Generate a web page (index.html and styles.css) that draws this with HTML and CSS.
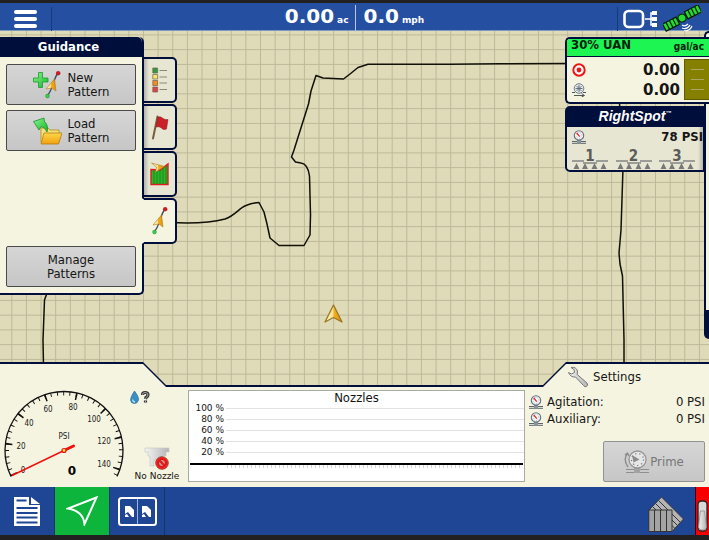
FILE: index.html
```html
<!DOCTYPE html>
<html lang="en">
<head>
  <meta charset="UTF-8">
  <meta name="viewport" content="width=device-width, initial-scale=1.0">
  <title>Guidance</title>
  <link rel="stylesheet" href="styles.css">
</head>
<body>
  <!-- Shared icon parts -->
  <svg class="defs" width="0" height="0">
    <defs>
      <linearGradient id="gold" x1="0" x2="1"><stop offset="0" stop-color="#fff6cf"/><stop offset=".48" stop-color="#fbe08a"/><stop offset=".52" stop-color="#f0b020"/><stop offset="1" stop-color="#e0920c"/></linearGradient>
      <linearGradient id="folder" x1="0" y1="0" x2="0" y2="1"><stop offset="0" stop-color="#ffd84a"/><stop offset="1" stop-color="#f0a010"/></linearGradient>
      <linearGradient id="green" x1="0" y1="0" x2="1" y2="1"><stop offset="0" stop-color="#8df58d"/><stop offset="1" stop-color="#12b52a"/></linearGradient>
      <linearGradient id="steel" x1="0" x2="1"><stop offset="0" stop-color="#f4f4f4"/><stop offset="1" stop-color="#b4b4b4"/></linearGradient>
      <symbol id="pattern" viewBox="0 0 16 28">
        <path d="M2 25C8 19 8 8 13 2" fill="none" stroke="#44505e" stroke-width="1.4"/>
        <path d="M9.500 8 L11 20 L7 17 L1 18Z" fill="url(#gold)" stroke="#b07a18" stroke-width=".6"/>
        <circle cx="2.500" cy="25" r="1.900" fill="#3bd04c" stroke="#158a28" stroke-width=".5"/>
        <circle cx="13.200" cy="2.200" r="1.900" fill="#e3151d" stroke="#8c1016" stroke-width=".5"/>
      </symbol>
      <symbol id="gauge" viewBox="0 0 14 14">
        <path d="M0 11.500H14M0 13.300H14" stroke="#5c6670" stroke-width="1"/>
        <rect x="5" y="9" width="4" height="4.500" fill="#8b959e"/>
        <circle cx="7" cy="5.400" r="4.700" fill="#f7f8fa" stroke="#66717c" stroke-width="1.100"/>
        <circle cx="7" cy="5.400" r="3" fill="none" stroke="#8492a0" stroke-width=".7" stroke-dasharray=".8 1.100"/>
        <path d="M7.800 6.600L4.700 3" stroke="#e02020" stroke-width="1.200"/>
      </symbol>
      <symbol id="boom" viewBox="0 0 36 9">
        <path d="M0 1H12M24 1H36M11 3H25" stroke="#9c9c98" stroke-width="2"/>
        <path d="M1.500 9L4.500 3L7.500 9ZM10 9L13 3L16 9ZM19.500 9L22.500 3L25.500 9ZM28.500 9L31.500 3L34.500 9Z" fill="#777"/>
      </symbol>
    </defs>
  </svg>

  <header class="topbar">
    <div class="topbar-side">
      <button class="menu-btn" aria-label="Menu"><span></span><span></span><span></span></button>
      <p class="reading">0.00 <small>ac</small></p>
    </div>
    <div class="topbar-side topbar-right">
      <p class="reading">0.0 <small>mph</small></p>
      <div class="status">
        <svg width="34" height="20" viewBox="0 0 34 20">
          <rect x="1.500" y="2" width="18.500" height="16" rx="4" fill="none" stroke="#fff" stroke-width="2.600"/>
          <path d="M22 10H28M33 4H28V16H33M28 10H33" fill="none" stroke="#fff" stroke-width="1.500"/>
          <path d="M29 2h5v4h-5zM29 8h5v4h-5zM29 14h5v4h-5z" fill="#fff"/>
        </svg>
        <svg width="38" height="27" viewBox="0 0 38 27">
          <g transform="rotate(-27 19 13)" stroke="#071c07" stroke-width="1.200" fill="#23dc32">
            <path d="M-1 9.500h3.800v8h-3.800zM2.800 9.500h3.800v8h-3.800zM6.600 9.500h3.800v8h-3.800zM10.400 9.500h3.600v8h-3.600zM24 8.500h3.800v8h-3.800zM27.800 8.500h3.800v8h-3.800zM31.600 8.500h3.800v8h-3.800zM35.400 8.500h3.800v8h-3.800z"/>
            <circle cx="19" cy="13" r="4"/>
          </g>
          <path d="M19 20q3 2 6-1M19 23q5 2 8-3M21 26q6 0 8-5" fill="none" stroke="#fff" stroke-width="1.200"/>
        </svg>
      </div>
    </div>
  </header>

  <main class="map">
    <svg class="map-canvas" viewBox="0 31 709 355" preserveAspectRatio="xMinYMin slice">
      <defs>
        <pattern id="grid" x="11.300" y="34.400" width="14.630" height="14.750" patternUnits="userSpaceOnUse">
          <path d="M.5 0V14.750M0 .5H14.630" stroke="#bdb898" stroke-width="1"/>
        </pattern>
      </defs>
      <rect y="31" width="709" height="355" fill="url(#grid)"/>
      <g fill="none" stroke="#101008" stroke-width="1.500" stroke-linejoin="round">
        <path d="M170 222.500C190 223.500 210 223 225 219C236 215 239 208 246 205.500Q252 203 259 202.500L264 212L267 224L270 238L279 245.500H304L310 235L310.500 215L309.500 176Q308 164 301 163L295.500 162L291.500 157L294 150L308.500 104L311 91L316 75.500L323 78L343.500 79L350 74L358 67.500L368 64.300H450L500 63.700L567 63.500"/>
        <path d="M623 168L621 230L619 253L620 264L622.500 276L624 340V366"/>
        <path d="M47 293L44.500 300L43 340L43.500 366"/>
        <path d="M619 100L620 108"/>
      </g>
      <path d="M333.500 305L342 322L333.500 317.500L325 322Z" fill="url(#gold)" stroke="#9b7724" stroke-width="1.300" stroke-linejoin="round"/>
    </svg>

    <section class="guidance">
      <div class="panel guidance-panel">
        <h2>Guidance</h2>
        <div class="guidance-body">
          <button class="btn">
            <svg width="29" height="28" viewBox="0 0 29 28">
              <path d="M5.500 1.500h4v5.500h5.500v4h-5.500v5.500h-4v-5.500H0.500V7h5z" fill="url(#green)" stroke="#1a9a2c" stroke-width=".8"/>
              <use href="#pattern" x="12" width="16" height="28"/>
            </svg>
            <span>New<br>Pattern</span>
          </button>
          <button class="btn">
            <svg width="29" height="28" viewBox="0 0 29 28">
              <path d="M8 25V11h7l2 2h9v12z" fill="#f5e07a" stroke="#b88a18" stroke-width=".8"/>
              <path d="M11 16h18l-3.500 11H8z" fill="url(#folder)" stroke="#b97c0c" stroke-width=".8"/>
              <path d="M.5 4.500L11 1L11.500 4.500Q16 9 14 15Q12 10 8 9.500L6 13Z" fill="url(#green)" stroke="#1c8f2b" stroke-width=".8"/>
            </svg>
            <span>Load<br>Pattern</span>
          </button>
          <button class="btn btn-bottom">Manage<br>Patterns</button>
        </div>
      </div>
      <nav class="tabs">
        <button class="tab" aria-label="Legend">
          <svg width="16" height="26" viewBox="0 0 16 26">
            <path d="M7.500 3.500H15M7.500 10H15M7.500 16H15M7.500 22.500H15" stroke="#888a80" stroke-width="1"/>
            <g stroke="#6a6450" stroke-width=".7"><path d="M.8 1h4.800v5H.8z" fill="#2f9e3a"/><path d="M.8 7.500h4.800v4.500H.8z" fill="#f5e66c"/><path d="M.8 13.500h4.800v5H.8z" fill="#f58a1e"/><path d="M.8 20h4.800v5H.8z" fill="#e34048"/></g>
          </svg>
        </button>
        <button class="tab" aria-label="Flags">
          <svg width="18" height="25" viewBox="0 0 18 25">
            <path d="M6.500 1.500L2 23.500" stroke="#7b5c38" stroke-width="2" stroke-linecap="round"/>
            <path d="M7 2Q10 1 12 3.500Q14 5 17 4.500L15.500 14Q12 15.500 10.500 13Q8 11 5 12Z" fill="#c9202a" stroke="#8c1118" stroke-width=".5"/>
          </svg>
        </button>
        <button class="tab" aria-label="Field map">
          <svg width="19" height="24" viewBox="0 0 19 24">
            <path d="M1 7.500L10 8L18 2V22.500H1Z" fill="#2db52a" stroke="#dc1e1e" stroke-width="1.400"/>
            <path d="M4 8V22M7 8V22M10 8V22M13 6V22M16 4V22" stroke="#187c1a" stroke-width=".8"/>
            <path d="M1.500 1L14.500 4.500L5.500 10L6.500 5Z" fill="url(#gold)" stroke="#a87a1c" stroke-width=".6"/>
          </svg>
        </button>
        <button class="tab tab-active" aria-label="Guidance">
          <svg width="16" height="28"><use href="#pattern" width="16" height="28"/></svg>
        </button>
      </nav>
    </section>

    <aside class="drawer"></aside>
    <aside class="readouts">
      <section class="panel product">
        <h2>30% UAN <small>gal/ac</small></h2>
        <div class="product-body">
          <p>
            <svg width="14" height="14" viewBox="0 0 14 14"><circle cx="7" cy="7" r="5.700" fill="#fff" stroke="#f01414" stroke-width="2"/><circle cx="7" cy="7" r="2.400" fill="#f01414"/></svg>
            <b>0.00</b>
          </p>
          <p>
            <svg width="14" height="14" viewBox="0 0 14 14"><circle cx="7" cy="5.500" r="4.800" fill="#e8ebee" stroke="#6d7882" stroke-width="1"/><path d="M7 2V9M3.500 5.500H10.500M4.500 3L9.500 8M9.500 3L4.500 8" stroke="#596673" stroke-width=".9"/><path d="M0 9.500H3M11 9.500H14M2 12.500H12M9.500 10.500L12.500 12.500L9.500 14" fill="none" stroke="#4c565f" stroke-width="1"/></svg>
            <b>0.00</b>
          </p>
          <div class="tank"><span></span><span></span><span></span></div>
        </div>
      </section>
      <section class="panel rightspot">
        <h2>RightSpot<sup>™</sup></h2>
        <p>
          <svg width="14" height="14"><use href="#gauge" width="14" height="14"/></svg>
          <b>78 PSI</b>
        </p>
        <div class="booms">
          <div class="boom"><b>1</b><svg width="36" height="9"><use href="#boom" width="36" height="9"/></svg></div>
          <div class="boom"><b>2</b><svg width="36" height="9"><use href="#boom" width="36" height="9"/></svg></div>
          <div class="boom"><b>3</b><svg width="36" height="9"><use href="#boom" width="36" height="9"/></svg></div>
        </div>
      </section>
    </aside>
  </main>

  <section class="dock">
    <svg class="dial" width="128" height="100" viewBox="0 0 128 100">
      <g fill="none" stroke="#111">
        <path d="M11 90.400A59 59 0 1 1 117 90.400" stroke-width="1.300"/>
        <path d="M12.800 89.500A57 57 0 1 1 115.200 89.500" pathLength="145" stroke-width="4" stroke-dasharray=".6 3.400"/>
        <path d="M14.100 88.800A55.500 55.500 0 1 1 113.900 88.800" pathLength="145" stroke-width="7" stroke-dasharray="1 19"/>
      </g>
      <g class="dial-labels">
        <text x="23" y="87">0</text>
        <text x="21" y="63">20</text>
        <text x="29" y="40">40</text>
        <text x="48" y="26">60</text>
        <text x="73" y="24">80</text>
        <text x="94" y="36">100</text>
        <text x="104" y="58">120</text>
        <text x="104" y="81">140</text>
        <text x="64" y="53">PSI</text>
        <text class="dial-value" x="72" y="89">0</text>
      </g>
      <path d="M12 89.500L64 64.500" stroke="#f01010" stroke-width="1.500"/>
      <path d="M64 64.500L73.500 60" stroke="#f01010" stroke-width="3" stroke-linecap="round"/>
      <circle cx="64" cy="64.500" r="2" fill="#ffe94a" stroke="#f01010" stroke-width="1.200"/>
    </svg>

    <div class="nozzle-state">
      <svg width="20" height="15" viewBox="0 0 20 15">
        <path d="M4.500 1Q9 7 8.500 10Q7.500 13.500 4.500 13.500Q1 13.500 .5 10Q.5 7 4.500 1Z" fill="#3a8fc4" stroke="#2a6c98" stroke-width=".7"/>
        <path d="M2.500 9.500Q3 12 5 12" fill="none" stroke="#a7dcf5" stroke-width="1.300"/>
        <path d="M12.500 5Q12.500 2.500 15 2.500Q18 2.500 18 5Q18 6.500 16 7.500L15.500 9M15.500 10.500V12.500" fill="none" stroke="#333" stroke-width="3.200"/>
        <path d="M12.500 5Q12.500 2.500 15 2.500Q18 2.500 18 5Q18 6.500 16 7.500L15.500 9M15.500 11V12" fill="none" stroke="#a8a8a4" stroke-width="1"/>
      </svg>
      <div class="nozzle">
        <svg width="26" height="24" viewBox="0 0 26 24">
          <path d="M1 2H25V6H22V10H18V17H14V14H10V20H6V10H4V6H1Z" fill="url(#steel)" stroke="#c8c8c4" stroke-width=".7"/>
          <circle cx="18" cy="17" r="6.300" fill="#ee3a34" stroke="#8f1512" stroke-width=".7"/>
          <circle cx="18" cy="17" r="4" fill="#b4a09c" stroke="#e81414" stroke-width="2.200"/>
          <path d="M15 14L21 20" stroke="#e81414" stroke-width="2.200"/>
        </svg>
        <p>No Nozzle</p>
      </div>
    </div>

    <section class="chart">
      <h3>Nozzles</h3>
      <ul>
        <li><span>100 %</span></li>
        <li><span>80 %</span></li>
        <li><span>60 %</span></li>
        <li><span>40 %</span></li>
        <li><span>20 %</span></li>
      </ul>
      <div class="chart-axis"></div>
    </section>

    <section class="pressure">
      <button class="settings">
        <svg width="22" height="22" viewBox="0 0 22 22">
          <path d="M4 1.500Q9 .5 10.500 5L10.200 8.500L20 17Q21.500 19.500 19.500 20.500Q18 21.500 16.500 19.500L8.500 11Q3.500 11.500 1.500 6.500L4.500 8L7.500 6.500L7 3.500Z" fill="url(#steel)" stroke="#777" stroke-width="1"/>
        </svg>
        Settings
      </button>
      <dl>
        <div><svg width="14" height="14"><use href="#gauge" width="14" height="14"/></svg><dt>Agitation:</dt><dd>0 PSI</dd></div>
        <div><svg width="14" height="14"><use href="#gauge" width="14" height="14"/></svg><dt>Auxiliary:</dt><dd>0 PSI</dd></div>
      </dl>
      <button class="btn prime" disabled>
        <svg width="25" height="24" viewBox="0 0 25 24">
          <path d="M2 19.500H25M2 22.500H25" stroke="#8e8e8e" stroke-width="1.200"/>
          <path d="M10 17h6v6h-6z" fill="#a2a2a2"/>
          <circle cx="13.500" cy="9.500" r="8.500" fill="#e6e6e6" stroke="#959595" stroke-width="1.300"/>
          <circle cx="13.500" cy="9.500" r="6" fill="none" stroke="#777" stroke-width="1.200" stroke-dasharray="1.200 3"/>
          <path d="M8 5L15.500 9.500L9.500 12.500Z" fill="#8c8c8c"/>
          <path d="M4 17Q-1 10 3 4M1 5L3.500 3L5 6" fill="none" stroke="#8c8c8c" stroke-width="1.400"/>
        </svg>
        Prime
      </button>
    </section>
  </section>

  <footer class="taskbar">
    <button class="task" aria-label="Reports">
      <svg width="26" height="29" viewBox="0 0 26 29">
        <path d="M0 0H15V8H26V29H0Z" fill="#fff"/>
        <path d="M17 0L26 7H17Z" fill="#fff"/>
        <path d="M2.500 3.500H12.500M2.500 11H23.500M2.500 16H23.500M2.500 20.500H23.500M2.500 25.500H23.500" stroke="#1f4694" stroke-width="2.200"/>
      </svg>
    </button>
    <button class="task task-active" aria-label="Navigate">
      <svg width="32" height="30" viewBox="0 0 32 30">
        <path d="M30.500 1.500L2 12.500Q17 15 18.500 28Z" fill="none" stroke="#fff" stroke-width="2"/>
      </svg>
    </button>
    <button class="task" aria-label="Layout">
      <svg width="39" height="29" viewBox="0 0 39 29">
        <rect x="1" y="1" width="37" height="27" rx="2.500" fill="none" stroke="#fff" stroke-width="2"/>
        <path d="M19.500 2V27" stroke="#9fb3da" stroke-width="1"/>
        <path d="M7 9H12L16 13V20H14L10 15L7 17ZM24 9H29L33 13V20H31L27 15L24 17Z" fill="#fff"/>
        <path d="M7 18V20H11L9 17ZM24 18V20H28L26 17Z" fill="#fff"/>
      </svg>
    </button>
    <div class="task-end">
      <svg width="36" height="36" viewBox="0 0 36 36">
        <g stroke="#333" stroke-width="1">
          <path d="M13.500 1L35.500 23L24 35.500L1 14Z" fill="#b4b4b4"/>
          <path d="M10.500 4.500L32.500 26.500M7.500 7.500L29.500 29.500M4.500 10.500L27 32.500" fill="none"/>
          <path d="M.8 14H24V35.500H.8Z" fill="#a4a4a4"/>
          <path d="M6.500 14V35.500M12.500 14V35.500M18.500 14V35.500"/>
        </g>
      </svg>
      <button class="master" aria-label="Master switch">
        <svg width="12" height="32" viewBox="0 0 12 32">
          <rect x="1" y="1" width="9" height="30" rx="3.500" fill="#d8d8d8" stroke="#222" stroke-width="1.300"/>
          <path d="M3.500 11H7.500L9.500 27Q9 30 5.500 30Q2 30 1.500 27Z" fill="url(#steel)" stroke="#888" stroke-width=".7"/>
        </svg>
      </button>
    </div>
  </footer>
</body>
</html>
```

FILE: styles.css
```css
* {
  box-sizing: border-box;
  margin: 0;
  padding: 0;
}
body {
  min-height: 100vh;
  display: flex;
  flex-direction: column;
  overflow: hidden;
  border-top: 3px solid #222021;
  border-bottom: 5px solid #222021;
  background-color: #dfdab7;
  color: #151515;
  font-family: 'DejaVu Sans Condensed', 'DejaVu Sans', sans-serif;
  font-size: 13px;
  line-height: 14px;
}
button {
  font: inherit;
  color: inherit;
  border: none;
  background: none;
  cursor: pointer;
}
svg {
  display: block;
  flex: none;
}
.defs {
  position: absolute;
}

/* Top bar */
.topbar {
  display: grid;
  grid-template-columns: 1fr 1fr;
  height: 28px;
  background-color: #2550a2;
  border-bottom: 1px solid #7f98c0;
  color: #fff;
}
.topbar-side {
  display: flex;
  justify-content: space-between;
  align-items: center;
  padding: 2px 6px 2px 0;
}
.topbar-right {
  padding: 2px 8px 2px 0;
}
.reading {
  display: flex;
  align-items: baseline;
  gap: 3px;
  font-family: 'DejaVu Sans', sans-serif;
  font-weight: bold;
  font-size: 20px;
  line-height: 23px;
}
.topbar-right .reading {
  border-left: 1px solid #b8c6e2;
  padding-left: 8px;
}
.reading small {
  font-size: 9px;
}
.menu-btn {
  display: flex;
  flex-direction: column;
  gap: 3px;
  width: 52px;
  height: 24px;
  padding: 3px 14px;
  border-right: 1px solid #153a80;
}
.menu-btn span {
  height: 4px;
  border-radius: 2px;
  background-color: #fff;
}
.status {
  display: flex;
  align-items: center;
  gap: 6px;
  height: 24px;
  padding-left: 5px;
  border-left: 1px solid #153a80;
}

/* Map and floating panels */
.map {
  position: relative;
  flex: 1;
  min-height: 300px;
}
.map-canvas {
  position: absolute;
  width: 100%;
  height: 100%;
}
.panel {
  border: 2px solid #000e3b;
  background-color: #f5f4e0;
}
.panel h2 {
  height: 20px;
  font-size: 13px;
  line-height: 18px;
  color: #fff;
  background-color: #000e3b;
}
.guidance {
  position: absolute;
  top: 6px;
  left: 0;
  display: flex;
  align-items: flex-start;
}
.guidance-panel {
  width: 144px;
  border-left: none;
  border-radius: 0 5px 5px 0;
  border-top: none;
}
.guidance-panel h2 {
  line-height: 20px;
  padding-right: 5px;
  text-align: center;
  border-radius: 0 5px 0 0;
}
.guidance-body {
  display: flex;
  flex-direction: column;
  gap: 5px;
  height: 236px;
  padding: 7px 6px 6px;
}
.btn {
  display: flex;
  align-items: center;
  justify-content: center;
  gap: 6px;
  height: 41px;
  border: 1px solid #4a4a4a;
  border-radius: 2px;
  background: linear-gradient(#d6d6d6, #c6c6c6);
  text-align: left;
}
.btn-bottom {
  margin-top: auto;
  text-align: center;
}
.tabs {
  display: flex;
  flex-direction: column;
  gap: 1px;
  margin: 20px 0 0 -2px;
}
.tab {
  display: flex;
  align-items: center;
  justify-content: center;
  width: 35px;
  height: 46px;
  border: 2px solid #000e3b;
  border-radius: 0 5px 5px 0;
  background: linear-gradient(to right, #b4b4a8, #e7e6d2 5px);
}
.tab-active {
  border-left-color: #f5f4e0;
  background: #f5f4e0;
}
.readouts {
  position: absolute;
  top: 6px;
  right: 0;
  display: flex;
  flex-direction: column;
  gap: 2px;
  width: 144px;
}
.readouts .panel {
  border-radius: 5px;
}
.readouts p {
  display: flex;
  align-items: center;
  justify-content: space-between;
}
.product {
  overflow: hidden;
}
.readouts .product {
  border-right: none;
  border-radius: 5px 0 0 5px;
}
.product h2 {
  display: flex;
  justify-content: space-between;
  height: 18px;
  padding: 0 5px 0 4px;
  line-height: 12px;
  color: #0a2010;
  background-color: #1cf552;
  border-bottom: 1px solid #000e3b;
}
.product small {
  font-size: 10px;
  line-height: 16px;
}
.product-body {
  position: relative;
  padding: 3px 29px 2px 5px;
}
.product-body p {
  height: 20px;
}
.product-body b {
  font-family: 'DejaVu Sans', sans-serif;
  font-size: 15px;
}
.tank {
  position: absolute;
  top: 2px;
  right: 0;
  display: flex;
  flex-direction: column;
  justify-content: space-evenly;
  align-items: center;
  width: 25px;
  height: 41px;
  border: 1px solid #5f5c00;
  border-right: none;
  background-color: #858000;
}
.tank span {
  width: 13px;
  height: 1px;
  background-color: #aaa665;
}
.readouts .rightspot {
  width: 139px;
  border-radius: 5px 0 0 5px;
  border-right-width: 1px;
  background: linear-gradient(to left, #b4b4a8, #e7e6d2 5px);
}
.rightspot h2 {
  height: 19px;
  font: italic bold 14px/16px 'Liberation Sans', sans-serif;
  text-align: center;
}
.rightspot sup {
  font-size: 6px;
  vertical-align: 6px;
  line-height: 6px;
}
.rightspot p {
  height: 19px;
  padding-left: 5px;
}
.booms {
  display: flex;
  justify-content: space-between;
  height: 24px;
  padding: 6px 8px 0 5px;
}
.boom {
  display: flex;
  flex-direction: column;
  align-items: center;
}
.boom b {
  height: 8px;
  font-size: 15px;
  line-height: 9px;
  color: #5c5c58;
}
.drawer {
  position: absolute;
  top: 0;
  right: 0;
  width: 5px;
  height: 308px;
  border: 2px solid #000e3b;
  border-right: none;
  border-bottom-width: 29px;
  border-radius: 5px 0 0 5px;
  background-color: #f5f4e0;
}

/* Dock */
.dock {
  position: relative;
  z-index: 1;
  display: flex;
  height: 125px;
  margin-top: -24px;
}
.dock::before,
.dock::after {
  content: '';
  position: absolute;
  z-index: -1;
  inset: 0;
  background-color: #000e3b;
  clip-path: polygon(0 0, 143px 0, 166px 23px, calc(100% - 166px) 23px, calc(100% - 143px) 0, 100% 0, 100% 100%, 0 100%);
}
.dock::after {
  top: 2px;
  background-color: #f5f4e0;
}
.dial {
  margin-top: 24px;
}
.dial-labels {
  font-size: 8px;
  text-anchor: middle;
  fill: #222;
}
.dial-value {
  font-family: 'DejaVu Sans', sans-serif;
  font-weight: bold;
  font-size: 12px;
  fill: #000;
}
.nozzle-state {
  display: flex;
  flex-direction: column;
  justify-content: space-between;
  width: 60px;
  padding: 28px 4px 4px 2px;
}
.nozzle {
  display: flex;
  flex-direction: column;
  align-items: center;
}
.nozzle p {
  font: 9px/13px 'DejaVu Sans', sans-serif;
  white-space: nowrap;
}
.chart {
  flex: 1;
  margin: 28px 0 5px;
  border: 1px solid #a9aaa4;
  background-color: #fff;
}
.chart h3 {
  height: 12px;
  font-weight: normal;
  font-size: 13px;
  text-align: center;
}
.chart ul {
  list-style: none;
  padding-bottom: 5px;
  font: 9px/11px 'DejaVu Sans', sans-serif;
}
.chart li {
  display: flex;
  align-items: center;
  gap: 2px;
}
.chart li span {
  width: 35px;
  text-align: right;
}
.chart li::after {
  content: '';
  flex: 1;
  height: 1px;
  background-color: #e2e2e2;
}
.chart-axis {
  height: 5px;
  margin: 0 1px;
  border-top: 2px solid #000;
  background: repeating-linear-gradient(to right, #d8d8d8 0 1px, #fff 1px 4px) 37px 0 no-repeat;
}
.pressure {
  display: flex;
  flex-direction: column;
  width: 184px;
  padding: 3px 4px 5px;
}
.settings {
  display: flex;
  align-items: center;
  gap: 4px;
  height: 24px;
  margin-left: 38px;
}
.pressure dl {
  padding-top: 4px;
}
.pressure dl div {
  display: flex;
  align-items: center;
  height: 17px;
}
.pressure dt {
  margin-left: 4px;
}
.pressure dd {
  margin-left: auto;
}
.prime {
  align-self: flex-end;
  width: 102px;
  margin-top: auto;
  gap: 1px;
  border-color: #929292;
  color: #767676;
}

/* Bottom bar */
.taskbar {
  display: flex;
  height: 48px;
  background-color: #1f4694;
}
.task {
  display: flex;
  align-items: center;
  justify-content: center;
  width: 55px;
  border-right: 1px solid #14346f;
}
.task-active {
  background-color: #0eb53d;
}
.task-end {
  display: flex;
  align-items: center;
  gap: 11px;
  margin-left: auto;
}
.task-end svg {
  margin-top: 5px;
}
.master {
  display: flex;
  align-items: center;
  align-self: stretch;
  width: 14px;
  padding: 4px 0 0 1px;
  border-left: 1px solid #400;
  background-color: #f80000;
}
```
